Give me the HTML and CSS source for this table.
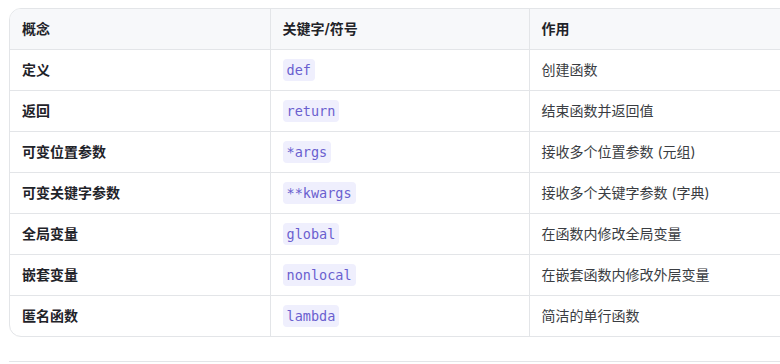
FILE: index.html
```html
<!DOCTYPE html>
<html lang="zh">
<head>
<meta charset="utf-8">
<link rel="stylesheet" href="styles.css">
</head>
<body>
<div class="page">
  <div class="table-wrap">
    <table class="tbl">
      <colgroup><col class="c1"><col class="c2"><col class="c3"></colgroup>
      <thead>
        <tr><th>概念</th><th>关键字/符号</th><th>作用</th></tr>
      </thead>
      <tbody>
        <tr><td class="name">定义</td><td><code>def</code></td><td>创建函数</td></tr>
        <tr><td class="name">返回</td><td><code>return</code></td><td>结束函数并返回值</td></tr>
        <tr><td class="name">可变位置参数</td><td><code>*args</code></td><td>接收多个位置参数 (元组)</td></tr>
        <tr><td class="name">可变关键字参数</td><td><code>**kwargs</code></td><td>接收多个关键字参数 (字典)</td></tr>
        <tr><td class="name">全局变量</td><td><code>global</code></td><td>在函数内修改全局变量</td></tr>
        <tr><td class="name">嵌套变量</td><td><code>nonlocal</code></td><td>在嵌套函数内修改外层变量</td></tr>
        <tr><td class="name">匿名函数</td><td><code>lambda</code></td><td>简洁的单行函数</td></tr>
      </tbody>
    </table>
  </div>
  <hr class="sep">
</div>
</body>
</html>
```

FILE: styles.css
```css
html, body {
  margin: 0;
  padding: 0;
  background: #ffffff;
  overflow: hidden;
}
body {
  font-family: "Inter", "Noto Sans CJK SC", sans-serif;
  color: #1f2329;
}
.page {
  padding: 8px 0 0 9px;
  width: 800px;
}
.table-wrap {
  width: 781px;
  border: 1px solid #e3e5e8;
  border-radius: 12px;
  overflow: hidden;
}
.tbl {
  width: 100%;
  border-collapse: collapse;
  table-layout: fixed;
  font-size: 14px;
}
.c1 { width: 260px; }
.c2 { width: 259px; }
.c3 { width: auto; }
.tbl th, .tbl td {
  text-align: left;
  padding: 0 12px;
  height: 41px;
  line-height: 20px;
  border-left: 1px solid #e3e5e8;
  border-top: 1px solid #e3e5e8;
  vertical-align: middle;
  box-sizing: border-box;
}
.tbl th:first-child, .tbl td:first-child { border-left: none; }
.tbl thead th {
  border-top: none;
  height: 40px;
  background: #f7f8fa;
  font-weight: 600;
  color: #1f2329;
}
.tbl td { color: #3a3d42; font-weight: 400; }
.tbl td.name { font-weight: 600; color: #1f2329; }
code {
  font-family: "DejaVu Sans Mono", monospace;
  font-size: 13.5px;
  line-height: 16px;
  padding: 3px 4px;
  border-radius: 4px;
  background: #efeffd;
  color: #6a5fcf;
}
.sep {
  border: none;
  border-top: 1px solid #e3e5e8;
  margin: 24px 0 0 0;
}
```
